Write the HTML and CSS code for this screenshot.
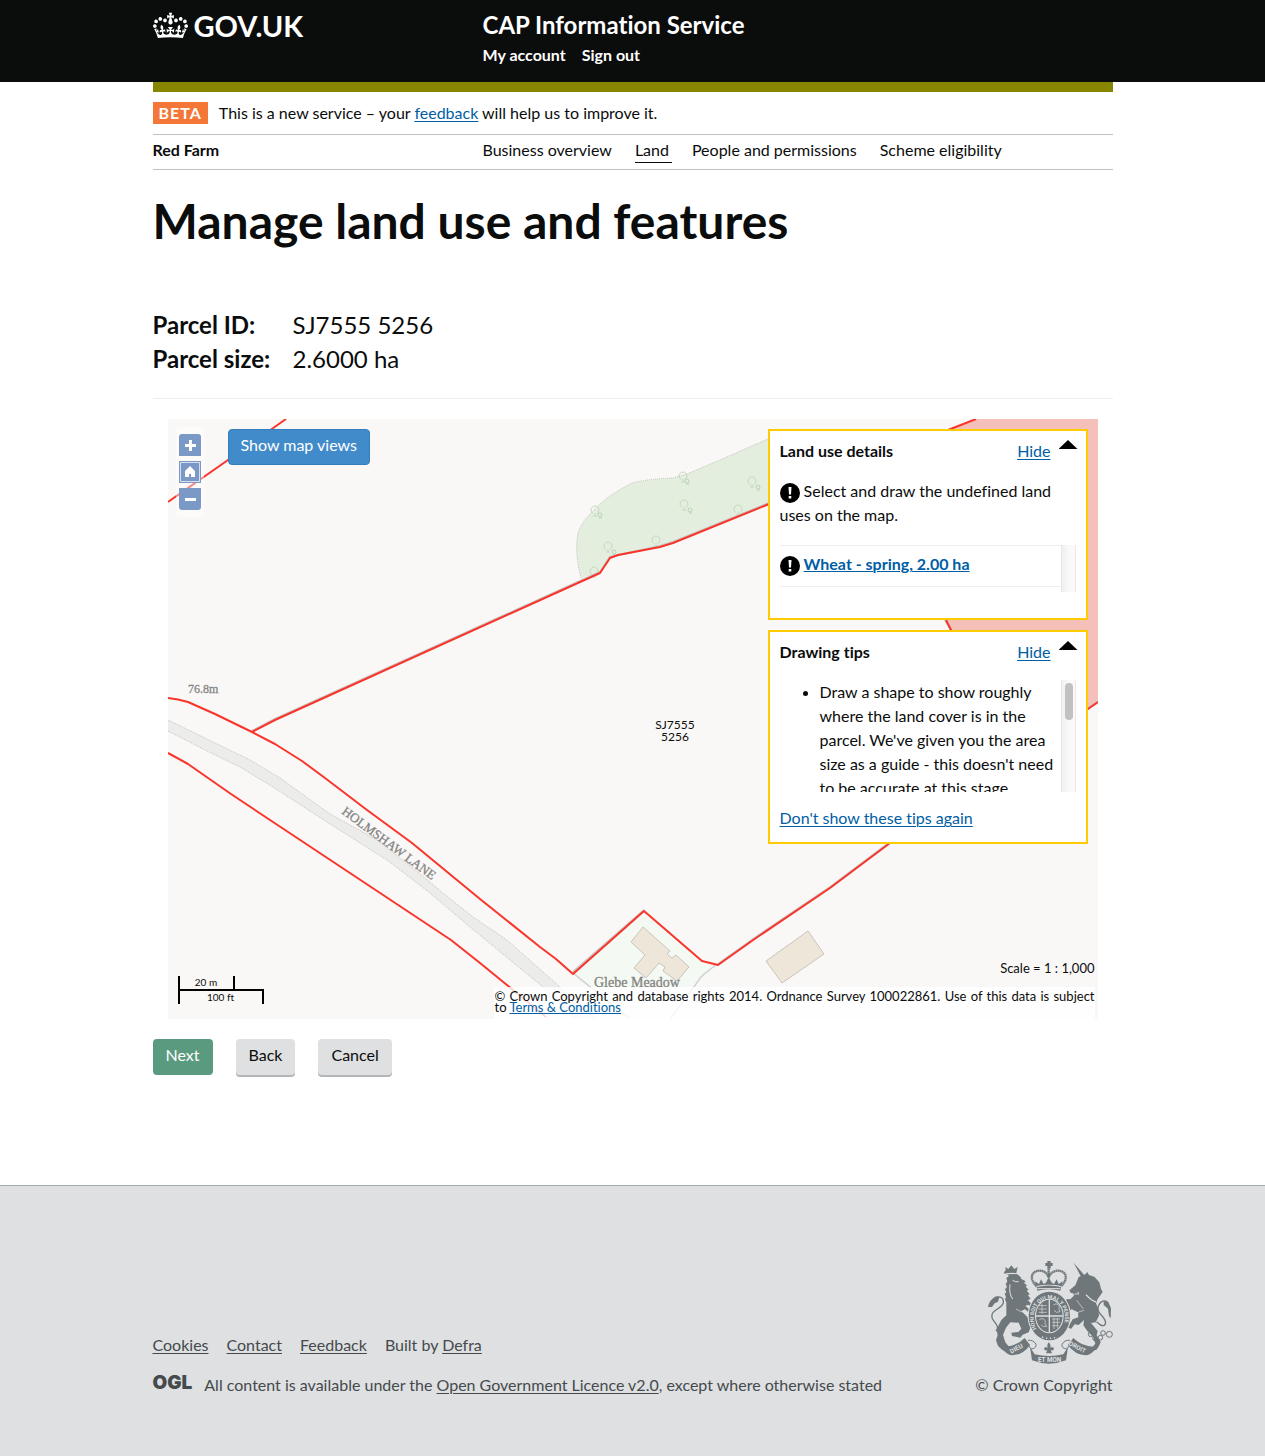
FILE: index.html
```html
<!DOCTYPE html>
<html lang="en">
<head>
<meta charset="utf-8">
<meta name="viewport" content="width=device-width, initial-scale=1">
<title>Manage land use and features - CAP Information Service</title>
<link rel="stylesheet" href="styles.css">
</head>
<body>
<header class="site-header">
  <div class="container header-grid">
    <a class="logo" href="#">
      <svg class="crown" viewBox="0 0 132 97" aria-hidden="true"><path d="M25 30.2c3.5 1.5 7.7-.2 9.1-3.7 1.5-3.6-.2-7.8-3.9-9.2-3.6-1.4-7.6.3-9.1 3.9-1.4 3.5.3 7.5 3.9 9zM9 39.5c3.6 1.5 7.8-.2 9.2-3.7 1.5-3.6-.2-7.8-3.9-9.1-3.6-1.5-7.6.2-9.1 3.8-1.4 3.5.3 7.5 3.8 9zM4.4 57.2c3.5 1.5 7.7-.2 9.1-3.8 1.5-3.6-.2-7.7-3.9-9.1-3.5-1.5-7.6.3-9.1 3.8-1.4 3.5.3 7.6 3.9 9.1zm38.3-21.4c3.5 1.5 7.7-.2 9.1-3.8 1.5-3.6-.2-7.7-3.9-9.1-3.6-1.5-7.6.3-9.1 3.8-1.3 3.6.4 7.7 3.9 9.1zm64.4-5.6c-3.6 1.5-7.8-.2-9.1-3.7-1.5-3.6.2-7.8 3.8-9.2 3.6-1.4 7.7.3 9.2 3.9 1.3 3.5-.4 7.5-3.9 9zm15.9 9.3c-3.6 1.5-7.7-.2-9.1-3.7-1.5-3.6.2-7.8 3.7-9.1 3.6-1.5 7.7.2 9.2 3.8 1.5 3.5-.3 7.5-3.8 9zm4.7 17.7c-3.6 1.5-7.8-.2-9.2-3.8-1.5-3.6.2-7.7 3.9-9.1 3.6-1.5 7.7.3 9.2 3.8 1.3 3.5-.4 7.6-3.9 9.1zM89.3 35.8c-3.6 1.5-7.8-.2-9.2-3.8-1.4-3.6.2-7.7 3.9-9.1 3.6-1.5 7.7.3 9.2 3.8 1.4 3.6-.3 7.7-3.9 9.1zM69.7 17.7l8.9 4.7V9.3l-8.9 2.8c-.2-.3-.5-.6-.9-.9L72.4 0H59.6l3.5 11.2c-.3.3-.6.5-.9.9l-8.8-2.8v13.1l8.8-4.7c.3.3.6.7.9.9l-5 15.4v.1c-.2.8-.4 1.6-.4 2.4 0 4.1 3.1 7.5 7 8.1h.2c.3 0 .7.1 1 .1.4 0 .7 0 1-.1h.2c4-.6 7.1-4.1 7.1-8.1 0-.8-.1-1.7-.4-2.4V34l-5.1-15.4c.4-.2.7-.6 1-.9zM66 92.8c16.9 0 32.8 1.1 47.1 3.2 4-16.9 8.9-26.7 14-33.5l-9.6-3.4c1 4.9 1.1 7.2 0 10.2-1.5-1.4-3-4.3-4.2-8.7L108.6 76c2.8-2 5-3.2 7.5-3.3-4.4 9.4-10 11.9-13.6 11.2-4.3-.8-6.3-4.6-5.6-7.9 1-4.7 5.7-5.9 8-.5 4.3-8.7-3-11.4-7.6-8.8 7.1-7.2 7.9-13.5 2.1-21.1-8 6.1-8.1 12.3-4.5 20.8-4.7-5.4-12.1-2.5-9.5 6.2 3.4-5.2 7.9-2 7.2 3.1-.6 4.3-6.4 7.8-13.5 7.2-10.3-.9-10.9-8-11.2-13.8 2.5-.5 7.1 1.8 11 7.3L80.2 60c-4.1 4.4-8 5.3-12.3 5.4 1.4-4.4 8-11.6 8-11.6H55.5s6.4 7.2 7.9 11.6c-4.2-.1-8-1-12.3-5.4l1.4 16.4c3.9-5.5 8.5-7.7 10.9-7.3-.3 5.8-.9 12.8-11.1 13.8-7.2.6-12.9-2.9-13.5-7.2-.7-5 3.8-8.3 7.1-3.1 2.7-8.7-4.6-11.6-9.4-6.2 3.7-8.5 3.6-14.7-4.6-20.8-5.8 7.6-5 13.9 2.2 21.1-4.7-2.6-11.9.1-7.7 8.8 2.3-5.5 7.1-4.2 8.1.5.7 3.3-1.3 7.1-5.7 7.9-3.5.7-9-1.8-13.5-11.2 2.5.1 4.7 1.3 7.5 3.3l-4.7-15.4c-1.2 4.4-2.7 7.2-4.3 8.7-1.1-3-.9-5.3 0-10.2l-9.5 3.4c5 6.9 9.9 16.7 14 33.5 14.8-2.1 30.8-3.2 47.7-3.2z"/></svg>
      <span>GOV.UK</span>
    </a>
    <div>
      <a class="service-name" href="#">CAP Information Service</a>
      <nav class="account-nav" aria-label="Account">
        <a href="#">My account</a>
        <a href="#">Sign out</a>
      </nav>
    </div>
  </div>
</header>

<div class="container">
  <div class="phase-banner">
    <strong class="phase-tag">BETA</strong>
    <span>This is a new service – your <a href="#">feedback</a> will help us to improve it.</span>
  </div>
  <div class="farm-bar">
    <strong>Red Farm</strong>
    <nav class="farm-nav" aria-label="Farm">
      <a href="#">Business overview</a>
      <a href="#" class="current" aria-current="page">Land</a>
      <a href="#">People and permissions</a>
      <a href="#">Scheme eligibility</a>
    </nav>
  </div>
</div>

<main class="container main">
  <h1>Manage land use and features</h1>
  <dl class="parcel">
    <dt>Parcel ID:</dt><dd>SJ7555 5256</dd>
    <dt>Parcel size:</dt><dd>2.6000 ha</dd>
  </dl>

  <section class="map" aria-label="Parcel map">
    <svg class="map-canvas" viewBox="0 0 930 600" preserveAspectRatio="xMidYMid slice" aria-hidden="true">
      <defs>
        <g id="tree" fill="none" stroke="#c3dac0" stroke-width="1">
          <path d="M-2 3.500a4 4 0 1 1 4 0M0 3v3M-2 6h4"/>
        </g>
        <g id="bush" fill="none" stroke="#b9d2b6" stroke-width="1">
          <circle r="2"/><path d="M-1 3h3"/>
        </g>
      </defs>
      <!-- woodland -->
      <path fill="#e3eede" d="M413 159C408 140 408 126 410 114Q414 102 427 90Q440 76 464 64Q479 60 505 59L519 55L559 38L600 20L620 14V77L601 85L505 124L492 128L449 136L442 139L432 154Z"/>
      <path class="edge" d="M413 159C408 140 408 126 410 114Q414 102 427 90Q440 76 464 64Q479 60 505 59L519 55L559 38L600 20"/>
      <use href="#tree" x="427" y="91"/><use href="#bush" x="432" y="96"/>
      <use href="#tree" x="515" y="57"/><use href="#bush" x="519" y="62"/>
      <use href="#tree" x="584" y="62"/><use href="#bush" x="590" y="68"/>
      <use href="#tree" x="516" y="85"/><use href="#bush" x="522" y="91"/>
      <use href="#tree" x="570" y="90"/><use href="#tree" x="488" y="121"/>
      <use href="#tree" x="440" y="127"/><use href="#bush" x="446" y="133"/>
      <use href="#tree" x="426" y="152"/>
      <!-- neighbouring parcel -->
      <path fill="#f5bfba" d="M808 0L780 11L770 150L778 201L784 213L850 330L920 290L930 283V0Z"/>
      <!-- lane -->
      <path fill="#ececeb" d="M0 301L47 324L82 341L112 359L162 395L209 421L245 449L275 474L305 498L339 521L392 568L429 600H408L375 568L302 508L262 474L219 441L162 405L105 368L72 348L47 336L0 312Z"/>
      <path class="edge" d="M0 301L47 324L82 341L112 359L162 395L209 421L245 449L275 474L305 498L339 521L392 568L429 600M0 312L47 336L72 348L105 368L162 405L219 441L262 474L302 508L375 568L408 600"/>
      <!-- meadow and buildings -->
      <path fill="#f4f9f3" d="M405 554L476 492L534 541L550 546Q535 554 528 566L502 600H462Z"/>
      <path fill="none" stroke="#cfcfcf" stroke-width="1.500" d="M405 554L462 600M548 546Q538 553 532 559Q528 566 502 600"/>
      <g fill="#eee7d9" stroke="#c9c4bb">
        <path d="M475 508L502 532L499 535L504 539L508 536L521 548L509 562L495 552L497 548L491 544L478 559L466 549L477 536L463 523Z"/>
        <path d="M640 512L656 535L614 564L598 542Z"/>
      </g>
      <!-- field boundaries -->
      <path class="shade" d="M84 312L107 300L432 153L442 138L492 127L505 123L601 84M405 553L476 491M550 545L588 518L662 468L722 423L920 289L930 282M777 201L784 213"/>
      <g class="boundary">
        <path d="M118 0L60 41L0 83M84 313L107 301L432 154L442 139L450 136L492 128L505 124L601 85L780 11L808 0M778 201L784 213L850 330"/>
        <path d="M0 279Q10 280 20 283L47 295L84 313L107 325L134 342L157 359L199 391L244 424L312 480L372 528L388 540L405 555L476 492L534 542L550 546L557 541L588 519L662 469L722 424L920 290L930 283"/>
        <path d="M0 334L20 345L63 375L102 401L283 521L312 544L378 598"/>
      </g>
      <g class="place-names">
        <text x="20" y="274" font-size="12">76.8m</text>
        <text x="426" y="568" font-size="14">Glebe Meadow</text>
        <text font-size="13" transform="translate(173 394) rotate(36.500)">HOLMSHAW LANE</text>
      </g>
      <g class="parcel-label">
        <text x="507" y="310">SJ7555</text>
        <text x="507" y="322">5256</text>
      </g>
    </svg>

    <div class="zoom-controls">
      <button type="button" class="zoom-in" aria-label="Zoom in"><svg viewBox="0 0 22 22"><path d="M6 11.500h11M11.500 6v11" stroke="#fff" stroke-width="3"/></svg></button>
      <button type="button" class="home" aria-label="Reset view"><svg viewBox="0 0 22 22"><path fill="#fff" d="M11 5l5 5v6h-4v-3h-2v3H6v-6z"/></svg></button>
      <button type="button" class="zoom-out" aria-label="Zoom out"><svg viewBox="0 0 22 22"><path d="M6 11.500h11" stroke="#fff" stroke-width="3"/></svg></button>
    </div>
    <button type="button" class="map-views">Show map views</button>

    <div class="panels">
      <section class="panel panel-land">
        <div class="panel-head">
          <h2>Land use details</h2>
          <a href="#">Hide</a>
          <span class="arrow"></span>
        </div>
        <p><svg class="alert" viewBox="0 0 20 20" aria-hidden="true"><circle cx="10" cy="10" r="10"/><path fill="#fff" d="M8.500 4h3l-.5 7.500h-2zM8.700 13h2.600v2.500H8.700z"/></svg> Select and draw the undefined land uses on the map.</p>
        <div class="scroller">
          <ul class="uses">
            <li><svg class="alert" viewBox="0 0 20 20" aria-hidden="true"><circle cx="10" cy="10" r="10"/><path fill="#fff" d="M8.500 4h3l-.5 7.500h-2zM8.700 13h2.600v2.500H8.700z"/></svg> <a href="#">Wheat - spring, 2.00 ha</a></li>
          </ul>
          <div class="track"></div>
        </div>
      </section>
      <section class="panel">
        <div class="panel-head">
          <h2>Drawing tips</h2>
          <a href="#">Hide</a>
          <span class="arrow"></span>
        </div>
        <div class="scroller scroller-tips">
          <ul class="tips">
            <li>Draw a shape to show roughly where the land cover is in the parcel. We've given you the area size as a guide - this doesn't need to be accurate at this stage.</li>
          </ul>
          <div class="track"><div class="thumb"></div></div>
        </div>
        <a href="#">Don't show these tips again</a>
      </section>
    </div>

    <div class="scale-bar">
      <div class="metric">20 m</div>
      <div class="imperial">100 ft</div>
    </div>
    <div class="map-foot">
      <div class="scale">Scale = 1 : 1,000</div>
      <div class="attribution">© Crown Copyright and database rights 2014. Ordnance Survey 100022861. Use of this data is subject to <a href="#">Terms &amp; Conditions</a></div>
    </div>
  </section>

  <div class="actions">
    <button type="button" class="button button-next">Next</button>
    <button type="button" class="button">Back</button>
    <button type="button" class="button">Cancel</button>
  </div>
</main>

<footer class="site-footer">
  <div class="container footer-row">
    <div>
      <ul class="footer-links">
        <li><a href="#">Cookies</a></li>
        <li><a href="#">Contact</a></li>
        <li><a href="#">Feedback</a></li>
        <li>Built by <a href="#">Defra</a></li>
      </ul>
      <div class="licence">
        <span class="ogl">OGL</span>
        <span>All content is available under the <a href="#">Open Government Licence v2.0</a>, except where otherwise stated</span>
      </div>
    </div>
    <div class="copyright">
      <svg class="crest" viewBox="84 32 375 309" aria-hidden="true">
        <defs>
          <path id="garter" d="M230 236A47 57 0 1 1 306 236"/>
        </defs>
        <g fill="#6f777b">
          <!-- crown -->
          <path d="M262 32h10v6h6v9h-6v8h-10v-8h-6v-9h6z"/>
          <path fill="none" stroke="#6f777b" stroke-width="7" stroke-dasharray="5 1" d="M230 108C202 80 220 60 240 61C254 62 262 70 266 82C270 70 279 62 293 61C313 60 331 80 303 108M266 56V82"/>
          <path d="M228 107l-3-14 12 8 6-14 8 14 7-4 8-17 9 17 7 4 8-14 6 14 12-8-4 14q-38-8-76 0z"/>
          <path d="M230 110q37-9 73 0l-2 11q-35-9-69 0z"/>
          <!-- lion -->
          <path d="M136 50l9 6 9-11 9 11 10-6-4 18-30 1z"/>
          <path d="M139 72l32-1 10 8 3 7 13 7-5 5 9 7-4 4 9 9-6 3 9 10-5 4 8 11-9 3 12 12 2 9-13-7-8 4 16 13-3 9-14-12-11 5 18 18 10 30-6 16-18 7-7 9-25-5-2-10 21-2 9-10-8-18-25-1-13 16-9 22 7 22 9 11 12 8-3 7-26-2-14-13-6-17 5-16-4-16 15-29 15-14 0-38-4-10 3-7-4-10 5-4-4-9 6-7-4-8 5-9-3-10 8-6-8-7-8-1 5-9 8-2z"/>
          <path fill="none" stroke="#6f777b" stroke-width="4" d="M108 242C126 222 84 210 98 188C106 176 128 172 130 156C132 138 112 134 100 150"/>
          <path d="M84 170q4-22 24-32l10 3-4 13-10 5-8 11z"/>
          <!-- unicorn -->
          <path d="M341 37l34 40-10 6z"/>
          <path d="M356 80l20-8 6-7 5 9 16 5 15 17 5 19 5 10-9 13-6 8-5 13 7 17 2 20-10 20-14 2 20 24-3 13 12 20-5 12-8 12-16 0 5-10 8-9-7-20-17-18-12-17 2-16-16 15-12-2-11 14-9-5 14-24 17-6-1-15-19-9-18 10-7 18-8-10 2-14-13-8 2-9 19-3 9-15 10 1 15-15 9 3 2-10-14 5-11-3-4-7 18-15z"/>
          <path fill="none" stroke="#6f777b" stroke-width="4" d="M410 214C434 238 440 220 434 208C428 194 412 190 414 172C418 152 438 144 444 160"/>
          <path d="M431 152l14 3 8 19-1 30-5-7-3-22-13-11z"/>
          <g fill="none" stroke="#6f777b" stroke-width="3"><circle cx="392" cy="252" r="7"/><circle cx="405" cy="264" r="7"/><circle cx="421" cy="262" r="7"/><circle cx="429" cy="248" r="7"/><circle cx="448" cy="252" r="9"/><circle cx="347" cy="132" r="5"/></g>
          <!-- garter and shield -->
          <ellipse cx="268" cy="197" rx="65" ry="75" fill="#dee0e2"/>
          <ellipse cx="268" cy="197" rx="62" ry="73"/>
          <ellipse cx="268" cy="197" rx="43" ry="52" fill="#dee0e2"/>
          <ellipse cx="268" cy="197" rx="40" ry="49"/>
          <!-- ribbons -->
          <path d="M120 288Q162 294 194 263L210 284Q186 318 150 314Q132 306 120 288z"/>
          <path d="M414 288Q372 294 340 263L324 284Q348 318 384 314Q402 306 414 288z"/>
          <path fill="none" stroke="#6f777b" stroke-width="3" d="M204 270Q220 268 228 282Q230 294 214 296Q206 290 206 282M330 270Q314 268 306 282Q304 294 320 296Q328 290 328 282"/>
          <path d="M210 290L224 312Q267 322 310 312L324 290L318 330Q267 350 216 330z"/>
        </g>
        <g fill="none" stroke="#dee0e2" stroke-width="2">
          <path stroke-width="4" d="M268 148V246M227 197H309M378 133q16 18 30 22"/>
          <path d="M236 166h24M236 176h24M236 186h24M276 206h24M276 216h24M276 226h20M246 160v30M282 202v34M292 202v30M238 208q12-8 18 4q-4 8 4 16q-10 4-16-4M280 164q12-8 18 4q-4 8 2 16q-12 6-18-4"/>
          <path stroke-width="3" d="M158 90q8 6 18 4M150 102q-4 28 8 44M232 115h68M138 71q16-4 32-1"/>
          <path d="M168 176q16 12 30 8M350 150l20 26M372 180q-18 2-24 14"/>
          <path stroke-width="4" stroke-dasharray="4 8" d="M246 260q22 8 46 0"/>
        </g>
        <path fill="#6f777b" d="M266 276q9 9 4 18q8-8 12 1q-2 8-10 4l4 10h-18l4-10q-8 4-10-4q4-9 12-1q-5-9 2-18z"/>
        <g class="crest-words">
          <text font-size="16"><textPath href="#garter">HONI SOIT QUI MAL Y PENSE</textPath></text>
          <text font-size="19" transform="translate(154 310) rotate(-28)">DIEU</text>
          <text font-size="19" x="234" y="334">ET MON</text>
          <text font-size="19" transform="translate(325 284) rotate(27)">DROIT</text>
        </g>
      </svg>
      <a href="#">© Crown Copyright</a>
    </div>
  </div>
</footer>
</body>
</html>
```
FILE: styles.css
```css
* { box-sizing: border-box; }

body {
  margin: 0;
  background: #fff;
  color: #0b0c0c;
  font: 16px/24px Lato, "Liberation Sans", sans-serif;
  font-variant-ligatures: no-common-ligatures;
}

a {
  color: #005ea5;
  text-decoration: underline;
  text-decoration-thickness: 1px;
  text-underline-offset: 2px;
}

button { font: inherit; cursor: pointer; }

.container { max-width: 960px; margin: 0 auto; }

/* Header */
.site-header { background: #0b0c0c; }

.header-grid {
  display: grid;
  grid-template-columns: 330px 1fr;
  min-height: 82px;
  padding: 9px 0 14px;
}

.site-header a { color: #fff; text-decoration: none; font-weight: 700; }

.logo {
  display: flex;
  align-items: flex-start;
  gap: 6px;
  padding-top: 3px;
  font-size: 29px;
  line-height: 28px;
}

.crown { width: 35px; height: 27px; fill: #fff; }

.service-name { display: block; font-size: 24px; line-height: 32px; }

.account-nav { display: flex; gap: 16px; padding-top: 2px; }

/* Banner and farm navigation */
.phase-banner {
  display: flex;
  align-items: center;
  gap: 11px;
  padding: 9px 0;
  border-top: 10px solid #888500;
  border-bottom: 1px solid #bfc1c3;
}

.phase-tag {
  padding: 0 6px;
  background: #f47738;
  color: #fff;
  line-height: 22px;
  letter-spacing: 1px;
}

.farm-bar {
  display: grid;
  grid-template-columns: 330px 1fr;
  padding: 3px 0 6px;
  border-bottom: 1px solid #bfc1c3;
}

.farm-nav { display: flex; gap: 23px; }
.farm-nav a { color: #0b0c0c; text-decoration: none; }
.farm-nav .current { margin-right: -3px; padding-right: 3px; border-bottom: 1px solid #0b0c0c; }

/* Page */
.main { padding-bottom: 110px; }

h1 { margin: 26px 0 62px; font-size: 48px; line-height: 50px; font-weight: 700; }

.parcel {
  display: grid;
  grid-template-columns: 140px 1fr;
  margin: 0 0 20px;
  padding-bottom: 22px;
  border-bottom: 1px solid #eee;
  font-size: 24px;
  line-height: 34px;
}
.parcel dt { font-weight: 700; }
.parcel dd { margin: 0; }

/* Map */
.map {
  position: relative;
  min-height: 600px;
  margin: 0 15px 20px;
  padding: 10px;
  background: #faf8f7;
  overflow: hidden;
}

.map-canvas { position: absolute; inset: 0; width: 100%; height: 100%; }
.boundary { fill: none; stroke: #f9352b; stroke-width: 2; stroke-linejoin: round; }
.shade { fill: none; stroke: #c4c2c1; stroke-width: 2; }
.edge { fill: none; stroke: #c2c2c2; stroke-width: 1; stroke-dasharray: 1 1; }
.place-names {
  fill: #858583;
  stroke: #858583;
  stroke-width: 0.3;
  font-family: "Liberation Serif", serif;
}
.parcel-label { fill: #0b0c0c; font-size: 12px; text-anchor: middle; }

.zoom-controls {
  position: absolute;
  top: 8px;
  left: 8px;
  display: grid;
  gap: 5px;
  padding: 7px 3px;
  border-radius: 4px;
  background: rgba(255, 255, 255, 0.4);
}
.zoom-controls button {
  width: 22px;
  height: 22px;
  padding: 0;
  border: 0;
  background: #7b99c6;
}
.zoom-controls svg { display: block; width: 22px; height: 22px; }
.zoom-controls .zoom-in { border-radius: 3px 3px 0 0; }
.zoom-controls .zoom-out { border-radius: 0 0 3px 3px; }
.zoom-controls .home { box-shadow: inset 0 0 0 1px #7b99c6, inset 0 0 0 2px #d5dfee; }

.map-views {
  position: absolute;
  top: 10px;
  left: 60px;
  height: 36px;
  padding: 0 12px 4px;
  border: 1px solid #357ebd;
  border-radius: 4px;
  background: #428bca;
  color: #fff;
}

.panels {
  position: relative;
  display: grid;
  gap: 10px;
  width: 320px;
  margin-left: auto;
}

.panel {
  padding: 8px 8px 12px 10px;
  border: 2px solid #fc0;
  background: #fff;
}
.panel-land { padding-bottom: 26px; }
.panel p { margin: 0 0 18px; }

.panel-head { display: flex; gap: 8px; margin-bottom: 16px; }
.panel-head h2 { flex: 1; margin: 0; font-size: 16px; line-height: 24px; font-weight: 700; }
.arrow {
  width: 19px;
  height: 9px;
  margin-top: 1px;
  background: #000;
  clip-path: polygon(50% 0, 100% 100%, 0 100%);
}

.alert { width: 20px; height: 20px; vertical-align: -6px; }

.scroller { display: flex; height: 47px; margin-right: 2px; overflow: hidden; }
.scroller-tips { height: 112px; margin-bottom: 14px; }
.scroller ul { flex: 1; margin: 0; padding: 0; }
.track {
  width: 15px;
  padding: 3px;
  border: solid #e8e8e8;
  border-width: 0 1px;
  background: linear-gradient(to right, #f0f0f0, #fafafa 60%);
}
.thumb { width: 8px; height: 37px; border-radius: 4px; background: #c1c1c1; }
.scroller .uses { list-style: none; }
.uses li { padding: 6px 0 10px; border: solid #eee; border-width: 1px 0; }
.uses a { font-weight: 700; text-underline-offset: 1px; }
.scroller .tips { padding: 0 0 0 40px; }

.scale-bar {
  position: absolute;
  left: 10px;
  bottom: 15px;
  width: 86px;
  font-size: 10px;
  line-height: 12px;
  text-align: center;
}
.metric { width: 57px; height: 13px; border: solid #000; border-width: 0 2px; }
.imperial { height: 15px; border: solid #000; border-width: 2px 2px 0; }

.map-foot {
  position: absolute;
  right: 3px;
  bottom: 0;
  width: 601px;
  font-size: 13px;
}
.scale { padding-bottom: 7px; text-align: right; }
.attribution {
  min-height: 32px;
  padding: 4px 0 6px 1px;
  background: rgba(255, 255, 255, 0.8);
  line-height: 11px;
  text-align: justify;
}
.attribution a { text-underline-offset: 1px; }

/* Actions */
.actions { display: flex; gap: 23px; }
.button {
  height: 36px;
  padding: 0 13px 4px;
  border: 0;
  border-radius: 4px;
  background: #dee0e2;
  box-shadow: 0 2px 0 #b2b6b9;
  color: #0b0c0c;
}
.button-next { background: #5a9a7e; box-shadow: none; color: #fff; }

/* Footer */
.site-footer {
  padding: 75px 0 59px;
  border-top: 1px solid #a1acb2;
  background: #dee0e2;
  color: #454a4c;
}
.site-footer a { color: #454a4c; }
.footer-row { display: flex; justify-content: space-between; align-items: flex-end; }
.footer-links { display: flex; gap: 18px; margin: 0 0 16px; padding: 0; list-style: none; }
.licence { display: flex; gap: 12px; }
.ogl { font: 900 19px/20px Inter, Lato, sans-serif; }
.copyright { display: grid; justify-items: end; gap: 9px; }
.site-footer .copyright a { text-decoration: none; }
.crest { width: 125px; height: 103px; }
.crest-words { fill: #dee0e2; font-family: Roboto, sans-serif; font-weight: 700; }
```
